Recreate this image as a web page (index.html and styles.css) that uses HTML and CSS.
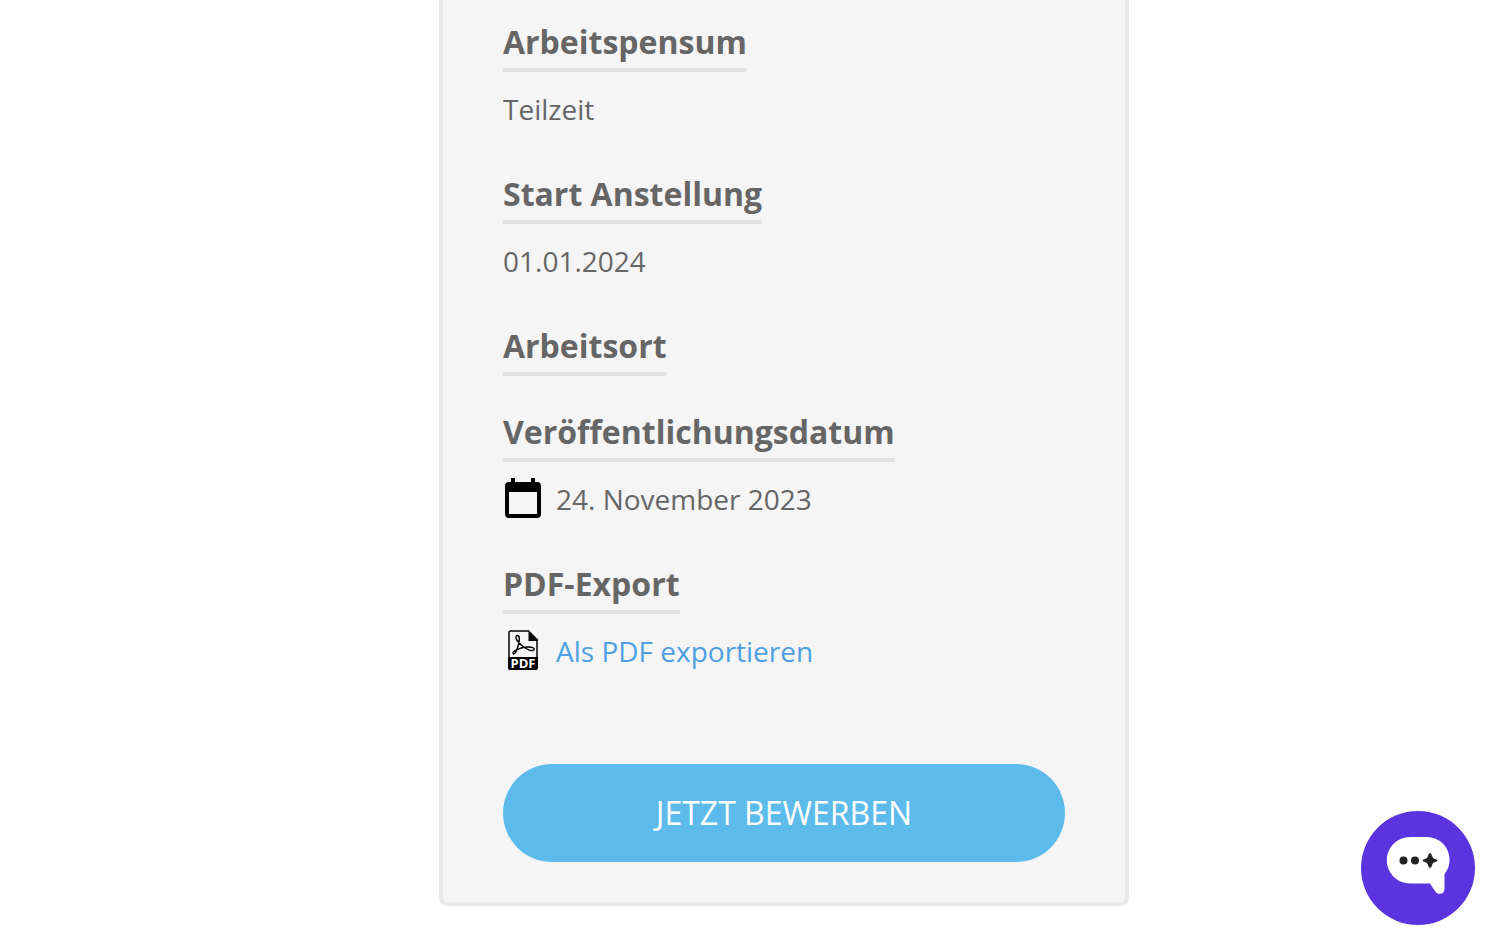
FILE: index.html
```html
<!DOCTYPE html>
<html lang="de">
<head>
    <meta charset="UTF-8">
    <meta name="viewport" content="width=device-width, initial-scale=1.0">
    <title>Stellenangebot</title>
    <link rel="stylesheet" href="styles.css">
</head>
<body>
    <main class="page">
        <aside class="job-card">
            <section class="job-section">
                <h2>Arbeitspensum</h2>
                <p>Teilzeit</p>
            </section>
            <section class="job-section">
                <h2>Start Anstellung</h2>
                <p>01.01.2024</p>
            </section>
            <section class="job-section">
                <h2>Arbeitsort</h2>
            </section>
            <section class="job-section">
                <h2>Veröffentlichungsdatum</h2>
                <p>
                    <svg class="icon" viewBox="0 0 40 40" aria-hidden="true">
                        <path fill-rule="evenodd" d="M8 0h4v4h16V0h4v4h2a4 4 0 0 1 4 4v28a4 4 0 0 1-4 4H6a4 4 0 0 1-4-4V8a4 4 0 0 1 4-4h2zM6 14v22h28V14z"/>
                    </svg>
                    24. November 2023
                </p>
            </section>
            <section class="job-section">
                <h2>PDF-Export</h2>
                <p>
                    <svg class="icon" viewBox="0 0 40 40" aria-hidden="true">
                        <path d="M26 1H7.500Q6 1 6 2.500V37.500Q6 39 7.500 39H32.500Q34 39 34 37.500V9.500" fill="none" stroke="#000" stroke-width="1.500"/>
                        <path d="M25.500 0L35 9.500V11H25.500zM5 27h30v11a2 2 0 0 1-2 2H7a2 2 0 0 1-2-2z"/>
                        <path d="M14.500 5.500c-2 0-2 2.500-.7 4.500 2.200 3.400 5.500 6.300 9.200 8.500 2.300 1.400 6 2.700 7.500 1.700s.5-2.700-2.500-3c-4.800-.5-10 .6-13.500 2.200-2.500 1.200-5 2.900-4.500 4.100.6 1.300 2.500-.5 3.300-2.500 1.300-3.200 3-8 3-12 0-2-.3-3.500-1.800-3.500z" fill="none" stroke="#000" stroke-width="1.400"/>
                        <text class="icon-text" x="20" y="38" text-anchor="middle">PDF</text>
                    </svg>
                    <a href="#">Als PDF exportieren</a>
                </p>
            </section>
            <button class="apply-button" type="button">JETZT BEWERBEN</button>
        </aside>
    </main>

    <!-- Chat -->
    <button class="chat-button" type="button" aria-label="Chat öffnen">
        <svg viewBox="0 0 114 114" aria-hidden="true">
            <path fill="#fff" d="M49 26h17a22.500 22.500 0 0 1 22.500 22.500c0 6-1.500 10-5 14.500V78c0 5.500-7 6.500-9.500 2l-5-7.500H49a23.250 23.250 0 0 1 0-46.500z"/>
            <circle cx="42.500" cy="49.500" r="4"/>
            <circle cx="54" cy="49.500" r="4"/>
            <path d="M69 42q1.500 0 2 3 .7 2.300 3 3 2.500.5 2.500 1.500t-2.500 1.500q-2.300.7-3 3-.5 3-2 3t-2-3q-.7-2.300-3-3-2.500-.5-2.500-1.500t2.500-1.500q2.300-.7 3-3 .5-3 2-3z"/>
        </svg>
    </button>
</body>
</html>
```
FILE: styles.css
```css
* {
    box-sizing: border-box;
}
body {
    font-family: "Open Sans", Arial, sans-serif;
    background-color: #fff;
    color: #666;
    margin: 0;
}
.page {
    display: flex;
    justify-content: center;
    padding: 0 0 36px 59px;
}
.job-card {
    width: 100%;
    max-width: 690px;
    padding: 20px 60px 40px;
    background-color: #f5f5f5;
    border: 4px solid #e9e9e9;
    border-top: none;
    border-radius: 0 0 8px 8px;
}
.job-section {
    margin-bottom: 34px;
}
.job-section h2 {
    width: fit-content;
    margin: 0;
    padding-bottom: 4px;
    border-bottom: 4px solid #e3e3e3;
    font-size: 32px;
    line-height: 44px;
}
.job-section p {
    display: flex;
    gap: 13px;
    margin: 16px 0 42px;
    font-size: 28px;
    line-height: 42px;
}
.job-section a {
    color: #4f9fe3;
    text-decoration: none;
}
.icon {
    flex: none;
    width: 40px;
    height: 40px;
    overflow: visible;
}
.icon-text {
    font-size: 13px;
    font-weight: bold;
    fill: #fff;
}
.apply-button {
    display: block;
    width: 100%;
    margin-top: 92px;
    padding: 27px 20px;
    border: none;
    border-radius: 49px;
    background-color: #5dbbec;
    color: #fff;
    font-family: inherit;
    font-size: 32px;
    line-height: 44px;
    cursor: pointer;
}
.chat-button {
    position: fixed;
    right: 34px;
    bottom: 18px;
    width: 114px;
    height: 114px;
    padding: 0;
    border: none;
    border-radius: 50%;
    background-color: #5b34e0;
    cursor: pointer;
}
.chat-button svg {
    display: block;
    fill: #222;
}
```
